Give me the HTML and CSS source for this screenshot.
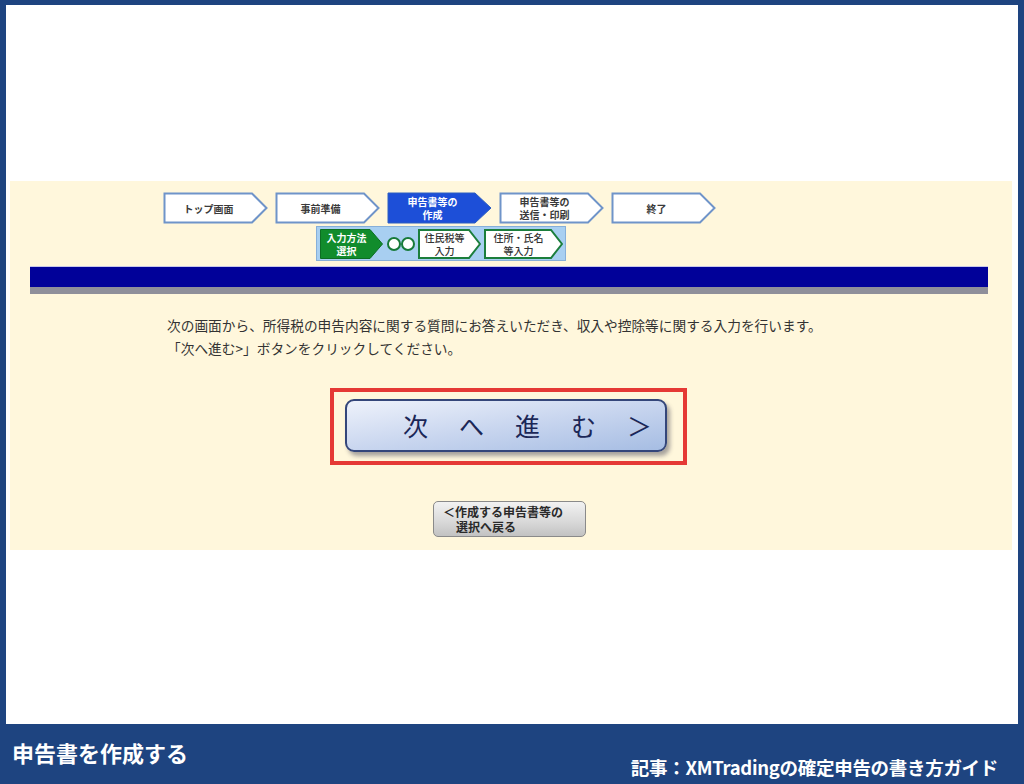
FILE: index.html
```html
<!DOCTYPE html>
<html lang="ja">
<head>
<meta charset="utf-8">
<title>申告書を作成する</title>
<link rel="stylesheet" href="styles.css">
</head>
<body>
<div class="screen">
  <div class="sheet">
    <div class="panel">
      <div class="steps">
        <div class="step">
          <svg class="shape" viewBox="0 0 105 32" preserveAspectRatio="none"><polygon points="1.5,1.5 89,1.5 103.5,16 89,30.5 1.5,30.5" fill="#fff" stroke="#6f94c9" stroke-width="2"/></svg>
          <span class="label">トップ画面</span>
        </div>
        <div class="step">
          <svg class="shape" viewBox="0 0 105 32" preserveAspectRatio="none"><polygon points="1.5,1.5 89,1.5 103.5,16 89,30.5 1.5,30.5" fill="#fff" stroke="#6f94c9" stroke-width="2"/></svg>
          <span class="label">事前準備</span>
        </div>
        <div class="step active">
          <svg class="shape" viewBox="0 0 105 32" preserveAspectRatio="none"><polygon points="1,1 88,1 104,16 88,31 1,31" fill="#1d4fd8" stroke="#2d5fc0" stroke-width="1"/></svg>
          <span class="label">申告書等の<br>作成</span>
        </div>
        <div class="step">
          <svg class="shape" viewBox="0 0 105 32" preserveAspectRatio="none"><polygon points="1.5,1.5 89,1.5 103.5,16 89,30.5 1.5,30.5" fill="#fff" stroke="#6f94c9" stroke-width="2"/></svg>
          <span class="label">申告書等の<br>送信・印刷</span>
        </div>
        <div class="step">
          <svg class="shape" viewBox="0 0 105 32" preserveAspectRatio="none"><polygon points="1.5,1.5 89,1.5 103.5,16 89,30.5 1.5,30.5" fill="#fff" stroke="#6f94c9" stroke-width="2"/></svg>
          <span class="label">終了</span>
        </div>
      </div>

      <div class="substeps">
        <div class="sub green">
          <svg class="shape" viewBox="0 0 63 30" preserveAspectRatio="none"><polygon points="0.5,0.5 50,0.5 62.5,15 50,29.5 0.5,29.5" fill="#118c2c" stroke="#0c6e22" stroke-width="1"/></svg>
          <span class="label">入力方法<br>選択</span>
        </div>
        <div class="dots">
          <svg width="28" height="16" viewBox="0 0 28 16"><circle cx="7" cy="8" r="6" fill="#fff" stroke="#177a39" stroke-width="2"/><circle cx="21" cy="8" r="6" fill="#fff" stroke="#177a39" stroke-width="2"/></svg>
        </div>
        <div class="sub w1">
          <svg class="shape" viewBox="0 0 63 30" preserveAspectRatio="none"><polygon points="1,1 51,1 62,15 51,29 1,29" fill="#fff" stroke="#1b7e3c" stroke-width="2"/></svg>
          <span class="label">住民税等<br>入力</span>
        </div>
        <div class="sub w2">
          <svg class="shape" viewBox="0 0 79 30" preserveAspectRatio="none"><polygon points="1,1 67,1 78,15 67,29 1,29" fill="#fff" stroke="#1b7e3c" stroke-width="2"/></svg>
          <span class="label">住所・氏名<br>等入力</span>
        </div>
      </div>

      <div class="titlebar"></div>

      <p class="intro">次の画面から、所得税の申告内容に関する質問にお答えいただき、収入や控除等に関する入力を行います。<br>「次へ進む&gt;」ボタンをクリックしてください。</p>

      <div class="highlight">
        <div class="nextbtn">次へ進む＞</div>
      </div>

      <div class="backwrap">
        <div class="backbtn"><span class="l1">＜作成する申告書等の</span><span class="l2">選択へ戻る</span></div>
      </div>
    </div>
  </div>
  <div class="footer">
    <div class="ftitle">申告書を作成する</div>
    <div class="fnote">記事：XMTradingの確定申告の書き方ガイド</div>
  </div>
</div>
</body>
</html>
```

FILE: styles.css
```css
* { box-sizing: border-box; }
html, body { margin: 0; padding: 0; }
body {
  width: 1024px;
  height: 784px;
  overflow: hidden;
  font-family: "Noto Sans CJK JP", "Noto Sans", sans-serif;
}
.screen {
  width: 1024px;
  height: 784px;
  background: #1e4480;
  padding: 5px 6px 0 6px;
  display: flex;
  flex-direction: column;
}
.sheet {
  height: 719px;
  background: #fff;
  padding: 176px 6px 0 4px;
}
.panel {
  height: 369px;
  background: #fff7dc;
  padding-top: 11px;
}

/* top steps */
.steps {
  display: flex;
  gap: 7px;
  margin-left: 153px;
}
.step {
  position: relative;
  width: 105px;
  height: 32px;
  display: flex;
  align-items: center;
  justify-content: center;
  padding-right: 14px;
}
.shape {
  position: absolute;
  left: 0; top: 0;
  width: 100%;
  height: 100%;
}
.label {
  position: relative;
  font-size: 10px;
  line-height: 13px;
  font-weight: 700;
  color: #3a3a3a;
  text-align: center;
  white-space: nowrap;
}
.step.active .label { color: #fff; }

/* sub steps */
.substeps {
  margin: 2px 0 0 306px;
  width: 250px;
  height: 35px;
  background: #a8cff1;
  border: 1px solid #86afd9;
  display: flex;
  align-items: center;
  padding-left: 3px;
}
.sub {
  position: relative;
  height: 30px;
  display: flex;
  align-items: center;
  justify-content: center;
  padding-right: 10px;
}
.sub.green { width: 63px; }
.sub.green .label { color: #fff; font-weight: 700; }
.sub.w1 { width: 63px; margin-left: 3px; }
.sub.w2 { width: 79px; margin-left: 3px; }
.sub .label { font-weight: 500; color: #333; font-size: 10px; line-height: 13px; }
.dots { display: flex; align-items: center; margin-left: 4px; }

/* navy bar */
.titlebar {
  margin: 5px 0 0 20px;
  width: 958px;
  height: 28px;
  background: #010199;
  border-top: 1px solid #c8c8e8;
  border-bottom: 7px solid #8f8f9a;
}

.intro {
  margin: 20px 0 0 157px;
  font-size: 13.7px;
  line-height: 23px;
  color: #333;
  white-space: nowrap;
}

.highlight {
  margin: 28px 0 0 320px;
  width: 357px;
  height: 77px;
  border: 4px solid #e53935;
  padding: 7px 0 0 11px;
}
.nextbtn {
  width: 322px;
  height: 53px;
  border: 2px solid #34467a;
  border-radius: 9px;
  background: linear-gradient(to bottom right, #eef2fb 0%, #c9d6ef 50%, #a6bde3 100%);
  box-shadow: 3px 4px 4px rgba(60, 60, 80, 0.45);
  font-size: 25px;
  letter-spacing: 31px;
  color: #1b2757;
  line-height: 49px;
  padding-left: 56px;
  white-space: nowrap;
}

.backwrap {
  margin: 36px 0 0 423px;
}
.backbtn {
  width: 153px;
  height: 36px;
  border: 1px solid #8a8a8a;
  border-radius: 5px;
  background: linear-gradient(to bottom, #f2f2f2 0%, #d8d8d8 60%, #c2c2c2 100%);
  display: flex;
  flex-direction: column;
  padding: 2px 0 0 9px;
  font-size: 12px;
  line-height: 15px;
  font-weight: 700;
  color: #2a2a2a;
  white-space: nowrap;
}
.backbtn .l2 { padding-left: 13px; }

/* footer */
.footer {
  flex: 1;
  display: flex;
  justify-content: space-between;
  padding: 13px 20px 0 6px;
  color: #fff;
  font-weight: 700;
}
.ftitle {
  font-size: 22px;
  line-height: 30px;
}
.fnote {
  font-size: 18.5px;
  line-height: 24px;
  margin-top: 18px;
  letter-spacing: -0.3px;
}
```
